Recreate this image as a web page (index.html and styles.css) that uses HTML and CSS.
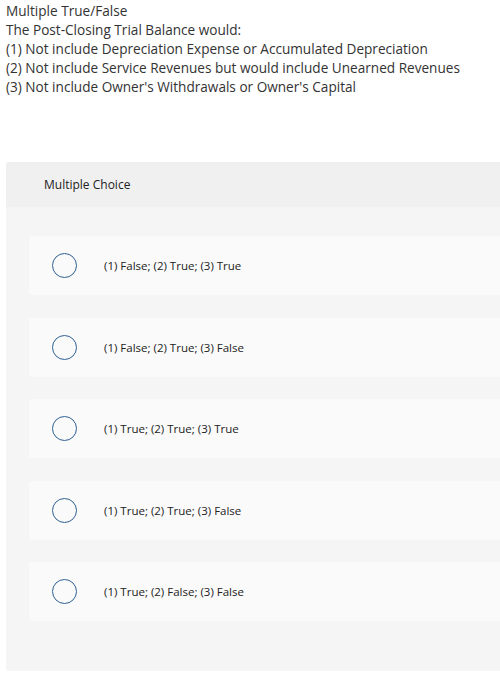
FILE: index.html
```html
<!DOCTYPE html>
<html>
<head>
<meta charset="utf-8">
<link rel="stylesheet" href="styles.css">
</head>
<body>
<div class="prompt">
  <p>Multiple True/False</p>
  <p>The Post-Closing Trial Balance would:</p>
  <p>(1) Not include Depreciation Expense or Accumulated Depreciation</p>
  <p>(2) Not include Service Revenues but would include Unearned Revenues</p>
  <p>(3) Not include Owner's Withdrawals or Owner's Capital</p>
</div>
<div class="panel">
  <div class="panel-head">Multiple Choice</div>
  <div class="options">
    <div class="option"><span class="radio"></span><span class="label">(1) False; (2) True; (3) True</span></div>
    <div class="option"><span class="radio"></span><span class="label">(1) False; (2) True; (3) False</span></div>
    <div class="option"><span class="radio"></span><span class="label">(1) True; (2) True; (3) True</span></div>
    <div class="option"><span class="radio"></span><span class="label">(1) True; (2) True; (3) False</span></div>
    <div class="option"><span class="radio"></span><span class="label">(1) True; (2) False; (3) False</span></div>
  </div>
</div>
</body>
</html>
```
FILE: styles.css
```css
html, body {
  margin: 0;
  padding: 0;
  background: #ffffff;
}
body {
  font-family: "Open Sans", "Liberation Sans", sans-serif;
  color: #333333;
  padding-left: 6px;
}
.prompt {
  padding-top: 1px;
  font-size: 13.6px;
  line-height: 19px;
}
.prompt p {
  margin: 0;
}
.panel {
  margin-top: 66px;
  background: #f5f5f5;
  border-radius: 3px 0 0 3px;
  height: 509px;
  overflow: hidden;
}
.panel-head {
  background: #f0f0f0;
  height: 45px;
  box-sizing: border-box;
  padding-left: 38px;
  display: flex;
  align-items: center;
  font-size: 12px;
  color: #222;
}
.options {
  padding: 29px 0 0 23px;
  display: flex;
  flex-direction: column;
  gap: 22.5px;
}
.option {
  background: #fafafa;
  border-radius: 3px 0 0 3px;
  height: 59px;
  display: flex;
  align-items: center;
  padding-left: 23px;
}
.radio {
  width: 25px;
  height: 25px;
  box-sizing: border-box;
  border: 1.5px solid #2f6092;
  border-radius: 50%;
  flex: none;
}
.label {
  margin-left: 27px;
  font-size: 11.5px;
  color: #222;
}
```
